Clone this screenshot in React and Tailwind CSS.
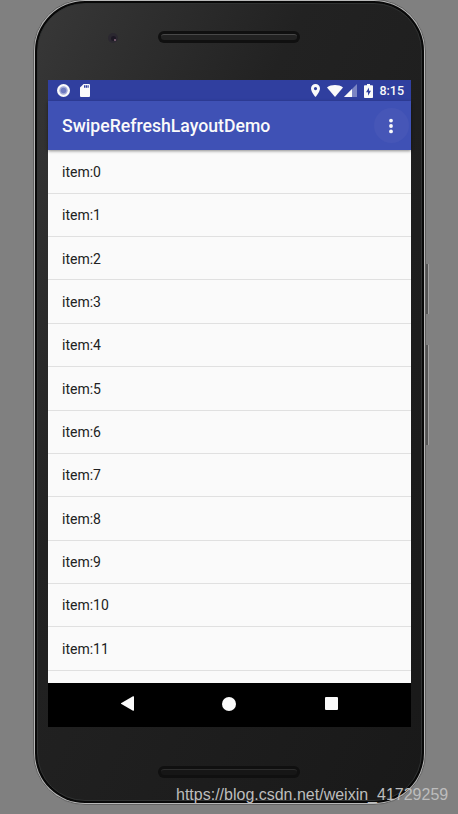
const items = Array.from({ length: 12 }, (_, i) => `item:${i}`);

function StatusBar() {
  return (
    <div className="flex h-[21px] shrink-0 items-center bg-[#303f9f] pl-[9px] pr-[7px] text-[#fafafa]">
      <svg width="13" height="13" viewBox="0 0 13 13">
        <circle cx="6.5" cy="6.5" r="6.5" fill="#fafafa" />
        <circle cx="6.5" cy="6.5" r="4.2" fill="#a5acd8" />
        <circle cx="6.5" cy="6.5" r="2.8" fill="#6f7bc0" />
      </svg>
      <svg className="ml-[10px]" width="10" height="13" viewBox="0 0 10 13">
        <path
          d="M3.6 0H9a1 1 0 0 1 1 1v11a1 1 0 0 1-1 1H1a1 1 0 0 1-1-1V3.6z"
          fill="currentColor"
        />
        <path d="M4 1.3h1.3v2.4H4zM5.8 1.3h1.2v2.4H5.8zM7.5 1.3h1.2v2.4H7.5z" fill="#303f9f" />
      </svg>

      <div className="ml-auto flex items-center">
        <svg width="9" height="13" viewBox="0 0 9 13">
          <path
            fillRule="evenodd"
            d="M4.5 0A4.5 4.5 0 0 0 0 4.5C0 7.9 4.5 13 4.5 13S9 7.9 9 4.5A4.5 4.5 0 0 0 4.5 0zm0 3a1.6 1.6 0 1 1 0 3.2 1.6 1.6 0 0 1 0-3.2z"
            fill="currentColor"
          />
        </svg>
        <svg className="ml-[7px]" width="16" height="12" viewBox="0 0 16 12">
          <path d="M0 2.4C2.2.8 5 0 8 0s5.8.8 8 2.4L8 12z" fill="currentColor" />
        </svg>
        <svg className="ml-[1px]" width="13" height="13" viewBox="0 0 13 13">
          <path d="M0 13L13 0v13z" fill="#7b85c3" />
          <path d="M0 13L8 5v8z" fill="currentColor" />
        </svg>
        <svg className="ml-[7px]" width="9" height="14" viewBox="0 0 9 14">
          <path
            d="M3 0h3v1.2h2.2a.8.8 0 0 1 .8.8v11.2a.8.8 0 0 1-.8.8H.8a.8.8 0 0 1-.8-.8V2a.8.8 0 0 1 .8-.8H3z"
            fill="currentColor"
          />
          <path d="M5 3.4L2 8.3h2v3.5l3-5H5z" fill="#303f9f" />
        </svg>
        <span className="ml-[6px] pt-px text-[12.5px] font-medium leading-none">
          8:15
        </span>
      </div>
    </div>
  );
}

function AppBar() {
  return (
    <div className="z-10 flex h-[49px] shrink-0 items-center justify-between bg-[#3f51b5] pl-[14px] pr-[2px] shadow-[0_1px_3px_rgba(0,0,0,0.45)]">
      <h1 className="pt-[2px] text-[17.65px] font-medium text-[#fafafa]">
        SwipeRefreshLayoutDemo
      </h1>
      <button className="flex size-[35px] items-center justify-center rounded-full bg-[#4656b7] pr-px">
        <svg width="4" height="16" viewBox="0 0 4 16" fill="#fafafa">
          <circle cx="2" cy="2.6" r="1.9" />
          <circle cx="2" cy="8" r="1.9" />
          <circle cx="2" cy="13.4" r="1.9" />
        </svg>
      </button>
    </div>
  );
}

function NavBar() {
  return (
    <div className="flex h-[44px] shrink-0 items-center bg-black pb-[3px] pl-[73px]">
      <svg width="13" height="15" viewBox="0 0 13 15" fill="#fafafa">
        <path d="M12 .3a.7.7 0 0 1 1 .6v13.2a.7.7 0 0 1-1 .6L.4 8.1a.7.7 0 0 1 0-1.2z" />
      </svg>
      <span className="ml-[88px] size-[14px] rounded-full bg-[#fafafa]" />
      <span className="ml-[89px] size-[13px] rounded-[1px] bg-[#fafafa]" />
    </div>
  );
}

function Speaker({ className, grille }) {
  return (
    <div
      className={`ml-[120px] flex h-[12px] w-[142px] shrink-0 items-center rounded-full bg-[#101010] px-[3px] ${className}`}
    >
      <div className={`h-[6px] w-full rounded-full border-t ${grille}`} />
    </div>
  );
}

export default function App() {
  return (
    <div className="relative h-[814px] w-[458px] overflow-hidden bg-[#808080] font-['Roboto',sans-serif]">
      {/* Side buttons */}
      <div className="absolute left-[425px] top-[264px] h-[50px] w-[4px] border-r border-[#a0a0a0] bg-[#555]" />
      <div className="absolute left-[425px] top-[345px] h-[100px] w-[4px] border-r border-[#a0a0a0] bg-[#555]" />

      {/* Phone body */}
      <div className="relative -mt-px ml-[33px] h-[806px] w-[393px] rounded-[52px] border border-[#626262] bg-[#b8b8b8] p-px">
        <div className="h-full rounded-[50px] bg-[#080808] p-[2px]">
          <div className="flex h-full flex-col rounded-[48px] border border-[#303232] bg-linear-to-br from-[#383838] via-[#222222] via-35% to-[#191919]">
            <Speaker className="mt-[27px]" grille="border-[#484848] bg-[#222]" />

            <div className="ml-[10px] mt-[37px] flex h-[647px] w-[363px] shrink-0 flex-col bg-[#fafafa]">
              <StatusBar />
              <AppBar />
              <ul className="min-h-0 flex-1 overflow-hidden pt-[0.4px] text-[14px] text-[#212121]">
                {items.map((item) => (
                  <li
                    key={item}
                    className="flex h-[43.36px] items-center border-b border-[#e0e0e0] pl-[14px] pt-[1.6px]"
                  >
                    {item}
                  </li>
                ))}
              </ul>
              <NavBar />
            </div>

            <Speaker className="mt-[39px]" grille="border-[#2e2e2e] bg-[#161616]" />
          </div>
        </div>

        {/* Front camera */}
        <div className="absolute left-[74px] top-[33px] flex size-[10px] items-center justify-center rounded-full bg-[#2b2830]">
          <span className="size-[5px] rounded-full bg-[#1d1824]" />
          <span className="absolute left-[6px] top-[6px] size-[2px] rounded-full bg-[#8d6d80]" />
        </div>
      </div>

      {/* Watermark */}
      <span className="absolute left-[176px] top-[785px] whitespace-nowrap font-['Liberation_Sans',sans-serif] text-[16px] leading-[20px] text-[#bdbdbd]">
        https://blog.csdn.net/weixin_41729259
      </span>
    </div>
  );
}
